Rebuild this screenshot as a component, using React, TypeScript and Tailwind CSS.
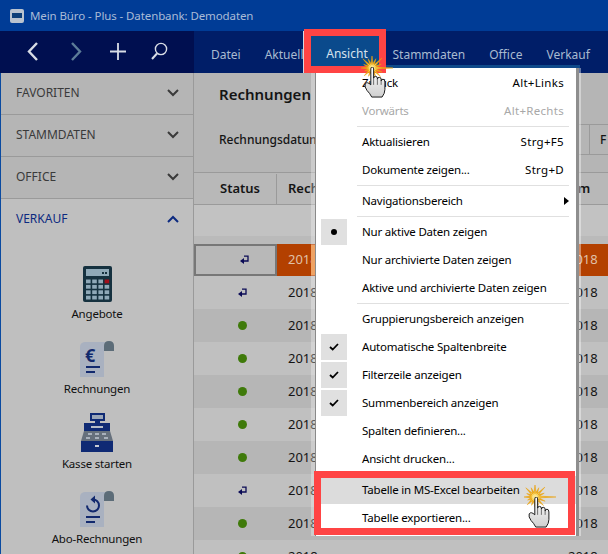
import React from "react";

const font = { fontFamily: '"Noto Sans", "Open Sans", sans-serif' };

function Chevron({ up, color }: { up?: boolean; color: string }) {
  return (
    <svg width="12" height="8" viewBox="0 0 12 8" fill="none" stroke={color} strokeWidth="2">
      <path d={up ? "M1 7 L6 2 L11 7" : "M1 1 L6 6 L11 1"} />
    </svg>
  );
}

function SideHead({ label }: { label: string }) {
  return (
    <div className="h-[42px] shrink-0 flex items-center justify-between pl-[15px] pr-[14px] pb-[2px] border-b border-[#9a9a9a] text-[12px] text-[#3a3a3a]">
      <span>{label}</span>
      <Chevron color="#3a3a3a" />
    </div>
  );
}

function Calculator() {
  const keys = [];
  for (let r = 0; r < 4; r++) {
    for (let c = 0; c < 4; c++) {
      keys.push(
        <rect key={`${r}-${c}`} x={3 + c * 6.2} y={13.5 + r * 5.4} width="4.6" height="3.8" fill={r === 0 && c === 3 ? "#a0101c" : "#8fa9b8"} />
      );
    }
  }
  return (
    <svg width="29" height="36" viewBox="0 0 29 36">
      <rect width="29" height="36" rx="2" fill="#15313f" />
      <rect x="3" y="3" width="23" height="7" fill="#8fa9b8" />
      <rect x="19" y="6" width="2" height="2" fill="#15313f" />
      <rect x="22" y="6" width="2" height="2" fill="#15313f" />
      {keys}
    </svg>
  );
}

function Paper({ children }: { children: React.ReactNode }) {
  return (
    <svg width="34" height="36" viewBox="0 0 34 36">
      <path d="M0 36 V6 Q0 1 6 1 H27 Q24 2 24 8 V36 Z" fill="#a9b1c0" />
      <path d="M24 10 V5 Q24 0 29 0 Q34 0 34 5 V10 Z" fill="#5c6c78" />
      {children}
      <rect x="6" y="25" width="14" height="2" fill="#12296e" />
      <rect x="6" y="30" width="9" height="2" fill="#12296e" />
    </svg>
  );
}

function Register() {
  return (
    <svg width="32" height="39" viewBox="0 0 32 39">
      <rect x="9" y="0" width="15" height="8" fill="#0f2a74" />
      <rect x="11" y="2" width="11" height="4" fill="#9aa6b8" />
      <rect x="14" y="8" width="5" height="2" fill="#0f2a74" />
      <rect x="3" y="10" width="26" height="8" fill="#0f2a74" />
      <rect x="10" y="13" width="12" height="2" fill="#b5bcc8" />
      <path d="M3 18 H29 L32 28 H0 Z" fill="#66707c" />
      <rect x="7" y="20" width="4" height="2" fill="#a9b1bc" />
      <rect x="14" y="20" width="4" height="2" fill="#a9b1bc" />
      <rect x="21" y="20" width="4" height="2" fill="#a9b1bc" />
      <rect x="5" y="24" width="4" height="2" fill="#a9b1bc" />
      <rect x="14" y="24" width="4" height="2" fill="#a9b1bc" />
      <rect x="23" y="24" width="4" height="2" fill="#a9b1bc" />
      <rect x="0" y="28" width="32" height="11" fill="#0f2a74" />
      <rect x="14" y="32" width="4" height="2" fill="#c8ccd4" />
    </svg>
  );
}

function SideItem({ icon, label }: { icon: React.ReactNode; label: string }) {
  return (
    <div className="h-[75px] flex flex-col items-center">
      <div className="h-[39px] flex items-end justify-center">{icon}</div>
      <div className="mt-[4px] text-[11.5px] tracking-[-0.2px] leading-[16px] text-[#101010]">{label}</div>
    </div>
  );
}

function ReturnArrow() {
  return (
    <svg width="9" height="10" viewBox="0 0 9 10" fill="none">
      <path d="M4 1.2 H8 V6 H3" stroke="#0a0a55" strokeWidth="1.3" />
      <path d="M0 6 L4 3 V9 Z" fill="#0a0a55" />
    </svg>
  );
}

function Row({ kind, dark }: { kind: "arrow" | "dot"; dark: boolean }) {
  return (
    <div className={`h-[33px] shrink-0 flex items-center ${dark ? "bg-[#b6b6b6]" : "bg-[#c0c0c0]"}`}>
      <div className="w-[83px] pl-[44px] flex">
        {kind === "arrow" ? <ReturnArrow /> : <div className="w-[9px] h-[9px] rounded-full bg-[#3f7a0a]" />}
      </div>
      <div className="pl-[11px] w-[291px] text-[13px] text-[#141414]">2018</div>
      <div className="text-[13px] text-[#141414]">2018</div>
    </div>
  );
}

// thin irregular rays around the click point, longest one to the right
const rays = [21, 11, 12, 9, 10, 9, 11, 8, 11, 9, 13, 10, 13, 10, 14, 10];

function Burst() {
  const outer: string[] = [];
  const inner: string[] = [];
  rays.forEach((r, i) => {
    const a = (i / rays.length) * Math.PI * 2;
    const b = ((i + 0.5) / rays.length) * Math.PI * 2;
    outer.push(`${11 + Math.cos(a) * r},${12 + Math.sin(a) * r}`);
    outer.push(`${11 + Math.cos(b) * 4.5},${12 + Math.sin(b) * 4.5}`);
    inner.push(`${11 + Math.cos(a) * r * 0.5},${12 + Math.sin(a) * r * 0.5}`);
    inner.push(`${11 + Math.cos(b) * 2.5},${12 + Math.sin(b) * 2.5}`);
  });
  return (
    <svg width="33" height="24" viewBox="0 0 33 24">
      <polygon points={outer.join(" ")} fill="#eeaa14" stroke="#e8a010" strokeWidth="0.5" />
      <polygon points={inner.join(" ")} fill="#fbe58a" />
    </svg>
  );
}

function Hand() {
  return (
    <svg width="23" height="31" viewBox="0 0 24 33">
      <defs>
        <linearGradient id="handFill" x1="0" y1="0" x2="0" y2="1">
          <stop offset="0" stopColor="#ffffff" />
          <stop offset="1" stopColor="#cfcfcf" />
        </linearGradient>
      </defs>
      <path
        d="M7 2 Q7 0 8.5 0 Q10 0 10 2 V12 Q10 10 12 10 Q14 10 14 12 V13 Q14 11 16 11 Q18 11 18 13 V15 Q18 13 20 13 Q22 13 22 16 V24 Q22 28 19 32 H8 Q6 28 3 25 Q0 21 1 18 Q3 15 7 19 Z"
        fill="url(#handFill)"
        stroke="#111111"
        strokeWidth="1"
      />
      <path d="M10 12 V19 M14 13 V19 M18 15 V19" stroke="#444444" strokeWidth="0.8" />
    </svg>
  );
}

function Mark({ type }: { type?: "dot" | "check" }) {
  if (!type) return <div className="w-[26px] h-[26px]" />;
  return (
    <div className="w-[26px] h-[26px] bg-[#e0e0e0] flex items-center justify-center">
      {type === "dot" ? (
        <div className="w-[6px] h-[6px] rounded-full bg-black" />
      ) : (
        <svg width="10" height="8" viewBox="0 0 10 8" fill="none" stroke="#000" strokeWidth="1.8">
          <path d="M1 4 L3.7 6.5 L9 1" />
        </svg>
      )}
    </div>
  );
}

function Item(props: {
  label: string;
  short?: string;
  muted?: boolean;
  mark?: "dot" | "check";
  arrow?: boolean;
  hot?: boolean;
}) {
  return (
    <div className={`h-[28px] flex items-center pl-[5px] pr-[12px] ${props.hot ? "bg-[#dcdcdc]" : ""}`}>
      <Mark type={props.mark} />
      <span className={`ml-[15px] flex-1 ${props.muted ? "text-[#a8a8a8]" : "text-black"}`}>{props.label}</span>
      {props.short && (
        <span className={`tracking-[0.3px] ${props.muted ? "text-[#a8a8a8]" : "text-black"}`}>{props.short}</span>
      )}
      {props.arrow && <div className="w-0 h-0 border-y-[4px] border-y-transparent border-l-[5px] border-l-black -mr-[5px]" />}
    </div>
  );
}

function Sep() {
  return <div className="h-[1px] bg-[#e0e0e0] ml-[41px] mr-[7px] my-[1px]" />;
}

export default function App() {
  const rows: { kind: "arrow" | "dot"; dark: boolean }[] = [
    { kind: "arrow", dark: false },
    { kind: "dot", dark: true },
    { kind: "dot", dark: false },
    { kind: "dot", dark: true },
    { kind: "dot", dark: false },
    { kind: "dot", dark: true },
    { kind: "arrow", dark: false },
    { kind: "dot", dark: true },
    { kind: "dot", dark: false },
  ];

  return (
    <div className="relative w-[608px] h-[554px] overflow-hidden bg-[#c0c0c0]" style={font}>
      {/* title bar */}
      <div className="h-[31px] bg-[#003c96] flex items-center pl-[10px]">
        <div className="w-[14px] h-[14px] rounded-[2px] bg-[#b9c3cf] flex items-center justify-center">
          <div className="w-[10px] h-[5px] bg-[#0d3f78]" />
        </div>
        <span className="ml-[6px] text-[11.5px] tracking-[-0.1px] text-[#a9bbd6]">Mein Büro - Plus - Datenbank: Demodaten</span>
      </div>

      {/* nav */}
      <div className="h-[42px] flex">
        <div className="w-[194px] bg-[#000f50] flex items-center text-white">
          <svg width="194" height="42" viewBox="0 0 194 42" fill="none">
            <path d="M37 12 L29 20.5 L37 29" stroke="#d8dde6" strokeWidth="2.4" />
            <path d="M72 12 L80 20.5 L72 29" stroke="#5c7c98" strokeWidth="2.4" />
            <path d="M118 12 V29 M110 20.5 H126" stroke="#d8dde6" strokeWidth="1.8" />
            <circle cx="161" cy="18" r="5.6" stroke="#d8dde6" strokeWidth="1.4" />
            <path d="M157 22.5 L152 28" stroke="#d8dde6" strokeWidth="2" />
          </svg>
        </div>
        <div className="flex-1 bg-[#001e68] flex items-center pt-[5px] text-[12px] text-[#a9bbd0]">
          <span className="ml-[17px]">Datei</span>
          <span className="ml-[24px]">Aktuell</span>
          <span className="ml-[89px]">Stammdaten</span>
          <span className="ml-[24px]">Office</span>
          <span className="ml-[24px]">Verkauf</span>
        </div>
      </div>

      {/* body */}
      <div className="flex h-[481px]">
        <div className="w-[194px] shrink-0 border-l border-l-[#0a4aa0] border-r border-r-[#9a9a9a] bg-[#b5b5b5] flex flex-col">
          <SideHead label="FAVORITEN" />
          <SideHead label="STAMMDATEN" />
          <SideHead label="OFFICE" />
          <div className="flex-1 bg-[#bfbfbf]">
            <div className="h-[39px] flex items-center justify-between pl-[15px] pr-[14px] text-[12px] text-[#0c2a80]">
              <span>VERKAUF</span>
              <Chevron up color="#0c2a80" />
            </div>
            <div className="pt-[25px]">
              <SideItem icon={<Calculator />} label="Angebote" />
              <SideItem
                label="Rechnungen"
                icon={
                  <Paper>
                    <text x="5" y="21" fontSize="18" fontWeight="700" fill="#12296e" fontFamily="Noto Sans, sans-serif">€</text>
                  </Paper>
                }
              />
              <SideItem icon={<Register />} label="Kasse starten" />
              <SideItem
                label="Abo-Rechnungen"
                icon={
                  <Paper>
                    <path d="M13 8.5 A6 6 0 1 1 7 14.5" fill="none" stroke="#12296e" strokeWidth="2" />
                    <path d="M10.5 8.5 L15 4.5 V12.5 Z" fill="#12296e" />
                  </Paper>
                }
              />
            </div>
          </div>
        </div>

        <div className="flex-1 min-w-0 overflow-hidden flex flex-col">
          <div className="h-[99px] bg-[#b5b5b5] shrink-0">
            <div className="pl-[25px] pt-[10px] h-[51px] text-[15px] font-semibold text-[#141414]">Rechnungen</div>
            <div className="flex h-[31px] text-[12px] font-medium text-[#141414]">
              <div className="w-[381px] shrink-0 pl-[25px] flex items-center">Rechnungsdatum</div>
              <div className="w-[14px] shrink-0 border-y border-[#9a9a9a]" />
              <div className="flex-1 border-y border-l border-[#9a9a9a] pl-[10px] flex items-center">F</div>
            </div>
          </div>
          <div className="h-[33px] shrink-0 flex items-center pt-[1px] bg-[#b8b8b8] border-y border-[#9a9a9a] text-[13px] font-semibold text-[#141414]">
            <div className="w-[83px] shrink-0 h-full flex items-center pl-[26px] border-r border-[#9a9a9a]">Status</div>
            <div className="pl-[11px] w-[270px] shrink-0">Rech</div>
            <div>Datum</div>
          </div>
          <div className="h-[31px] shrink-0 bg-[#c2c2c2]" />
          <div className="h-[8px] shrink-0 bg-[#bababa]" />
          <div className="h-[32px] shrink-0 flex items-center text-[13px] text-[#e0c0a8] bg-[#b34000]">
            <div className="w-[83px] h-full pl-[44px] flex items-center bg-[#b8b8b8] border-2 border-[#777777]">
              <ReturnArrow />
            </div>
            <div className="pl-[11px] w-[291px]">2018</div>
            <div>2018</div>
          </div>
          {rows.map((r, i) => (
            <Row key={i} kind={r.kind} dark={r.dark} />
          ))}
        </div>
      </div>

      {/* open menu */}
      <div className="absolute left-[311px] top-[245px] w-[4px] h-[30px] bg-[#e87a20]" />
      <div className="absolute left-[315px] top-[68px] w-[261px] h-[468px] bg-white border-l border-[#8a8a8a] shadow-[3px_0_0_#8e8e8e,5px_0_0_rgba(255,255,255,0.4),-4px_0_0_rgba(255,255,255,0.3)] text-[11.5px] tracking-[-0.2px] pt-[1px]">
        <Item label="Zurück" short="Alt+Links" />
        <Item label="Vorwärts" short="Alt+Rechts" muted />
        <Sep />
        <Item label="Aktualisieren" short="Strg+F5" />
        <Item label="Dokumente zeigen..." short="Strg+D" />
        <Sep />
        <Item label="Navigationsbereich" arrow />
        <Sep />
        <Item label="Nur aktive Daten zeigen" mark="dot" />
        <Item label="Nur archivierte Daten zeigen" />
        <Item label="Aktive und archivierte Daten zeigen" />
        <Sep />
        <Item label="Gruppierungsbereich anzeigen" />
        <Item label="Automatische Spaltenbreite" mark="check" />
        <Item label="Filterzeile anzeigen" mark="check" />
        <Item label="Summenbereich anzeigen" mark="check" />
        <Item label="Spalten definieren..." />
        <Item label="Ansicht drucken..." />
        <Sep />
        <Item label="Tabelle in MS-Excel bearbeiten" hot />
        <Item label="Tabelle exportieren..." />
      </div>
      <div className="absolute left-[386px] top-[65px] w-[194px] h-[3px] bg-[#0f4a8a]" />
      <div className="absolute left-[303px] top-[31px] w-[1px] h-[42px] bg-[#d0d8e4]" />

      {/* Ansicht highlight with red frame */}
      <div className="absolute left-[304px] top-[29px] w-[82px] h-[44px] border-[7px] border-[#ff4444] bg-[#0a4a8c] flex items-center justify-center pt-[5px] pl-[4px] text-[12px] text-[#d8e2ee]">
        Ansicht
      </div>
      <div className="absolute left-[314px] top-[471px] w-[261px] h-[64px] border-[7px] border-[#ff4444]" />

      {/* click cursors */}
      <div className="absolute left-[361px] top-[56px]"><Burst /></div>
      <div className="absolute left-[364px] top-[67px]"><Hand /></div>
      <div className="absolute left-[524px] top-[485px]"><Burst /></div>
      <div className="absolute left-[528px] top-[497px]"><Hand /></div>
    </div>
  );
}
